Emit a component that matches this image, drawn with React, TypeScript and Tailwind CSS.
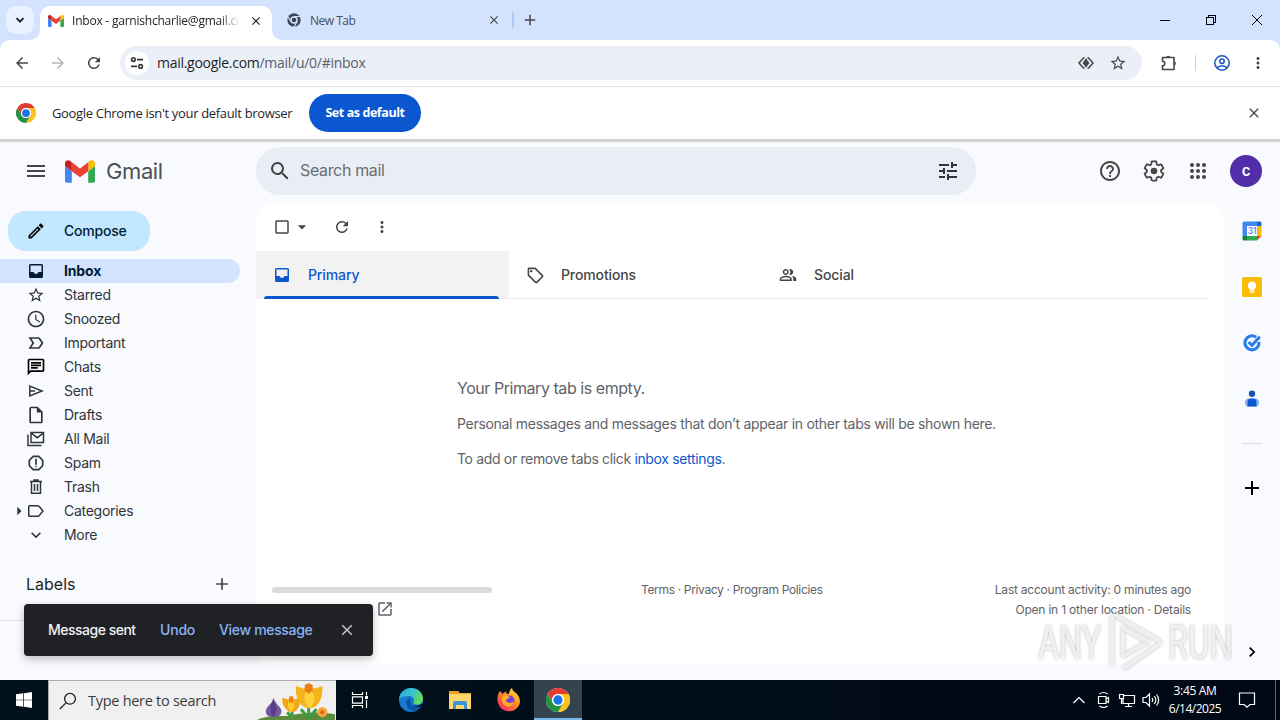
import type { ReactNode } from 'react';
import {
  MdAdd,
  MdArrowBack,
  MdArrowDropDown,
  MdArrowForward,
  MdArrowRight,
  MdCheckBoxOutlineBlank,
  MdChevronRight,
  MdClose,
  MdExpandMore,
  MdHelpOutline,
  MdLabelImportantOutline,
  MdMenu,
  MdMoreVert,
  MdOpenInNew,
  MdOutlineChat,
  MdOutlineEdit,
  MdOutlineInsertDriveFile,
  MdOutlinePeopleAlt,
  MdOutlineReport,
  MdOutlineSell,
  MdRefresh,
  MdSchedule,
  MdSearch,
  MdStarBorder,
  MdTune,
} from 'react-icons/md';

const GmailLogo = ({ className }: { className?: string }) => (
  <svg viewBox="52 42 88 66" className={className}>
    <path fill="#4285f4" d="M58 108h14V74L52 59v43c0 3.32 2.69 6 6 6" />
    <path fill="#34a853" d="M120 108h14c3.32 0 6-2.69 6-6V59l-20 15" />
    <path fill="#fbbc04" d="M120 48v26l20-15v-8c0-7.42-8.47-11.65-14.4-7.2" />
    <path fill="#ea4335" d="M72 74V48l24 18 24-18v26L96 92" />
    <path fill="#c5221f" d="M52 51v8l20 15V48l-5.6-4.2c-5.94-4.45-14.4-.22-14.4 7.2" />
  </svg>
);

const ChromeLogo = ({ className }: { className?: string }) => (
  <svg viewBox="0 0 48 48" className={className}>
    <circle cx="24" cy="24" r="24" fill="#fff" />
    <path fill="#e33b2e" d="M3.2 12A24 24 0 0 1 44.8 12H24a12 12 0 0 0-10.4 18z" />
    <path fill="#fcc31e" d="M44.8 12A24 24 0 0 1 24 48l10.4-18A12 12 0 0 0 24 12z" />
    <path fill="#229342" d="M24 48A24 24 0 0 1 3.2 12l10.4 18a12 12 0 0 0 20.8 0z" />
    <circle cx="24" cy="24" r="12" fill="#fff" />
    <circle cx="24" cy="24" r="9.3" fill="#1a73e8" />
  </svg>
);

const TabCorner = ({ className }: { className?: string }) => (
  <svg viewBox="0 0 10 10" className={`absolute bottom-0 w-2.5 h-2.5 ${className}`}>
    <path fill="#fff" d="M10 0v10H0A10 10 0 0 0 10 0" />
  </svg>
);

const TabStrip = () => (
  <div className="h-10 flex items-center bg-[#d3e3fd] text-[#1f1f1f]">
    <div className="ml-1.5 w-7 h-7 rounded-[10px] bg-[#e9f1fe] flex items-center justify-center">
      <svg viewBox="0 0 10 10" className="w-2.5 h-2.5" fill="none" stroke="#1f1f1f" strokeWidth="1.8">
        <path d="M1.5 3.2 5 6.7l3.5-3.5" />
      </svg>
    </div>
    <div className="relative ml-1.5 w-[232px] h-[34px] self-end bg-white rounded-t-[10px] flex items-center pl-2 pb-[5px]">
      <TabCorner className="-left-2.5" />
      <TabCorner className="-right-2.5 -scale-x-100" />
      <GmailLogo className="w-4 h-4 shrink-0" />
      <span className="ml-2 w-[168px] shrink-0 overflow-hidden whitespace-nowrap text-[12px] tracking-[-0.22px] mask-r-from-88% mask-r-to-100%">
        Inbox - garnishcharlie@gmail.com
      </span>
      <MdClose className="ml-[9px] w-3.5 h-3.5 shrink-0" />
    </div>
    <div className="w-[240px] h-10 flex items-center pl-[15px]">
      <svg viewBox="0 0 48 48" className="w-3.5 h-3.5">
        <circle cx="24" cy="24" r="23" fill="#3c4656" />
        <path d="M24 12h21M13.6 30 3 12M34.4 30 24 48" stroke="#d3e3fd" strokeWidth="4" />
        <circle cx="24" cy="24" r="10.5" fill="#3c4656" stroke="#d3e3fd" strokeWidth="5" />
      </svg>
      <span className="ml-[9px] pt-0.5 text-[12px] text-[#474f5c] tracking-[-0.5px]">New Tab</span>
      <MdClose className="ml-auto mr-[11px] w-3.5 h-3.5 text-[#474747]" />
    </div>
    <div className="w-0.5 h-4 rounded bg-[#a8c7fa]" />
    <MdAdd className="ml-[7px] w-[18px] h-[18px] text-[#474747]" />
    <div className="ml-auto mr-[18px] flex items-center gap-9">
      <svg viewBox="0 0 10 10" className="w-2.5 h-2.5" stroke="#000" shapeRendering="crispEdges">
        <path d="M0 5.5h10" />
      </svg>
      <svg viewBox="0 0 10 10" className="w-2.5 h-2.5" fill="none" stroke="#000" shapeRendering="crispEdges">
        <path d="M.5 2.5h7v7h-7zM2.5 2.5v-2h7v7h-2" />
      </svg>
      <svg viewBox="0 0 10 10" className="w-2.5 h-2.5" stroke="#000">
        <path d="m0 0 10 10M10 0 0 10" />
      </svg>
    </div>
  </div>
);

const AddressBar = () => (
  <div className="bg-[#d3e3fd]">
    <div className="h-[47px] flex items-center bg-white rounded-t-[10px] border-b border-[#e1e3e8] text-[#474747]">
      <MdArrowBack className="ml-[13px] w-[18px] h-[18px]" />
      <MdArrowForward className="ml-[18px] w-[18px] h-[18px] text-[#b4b4b4]" />
      <MdRefresh className="ml-[18px] w-[18px] h-[18px]" />
      <div className="ml-[17px] w-[1022px] h-[34px] rounded-full bg-[#ebeff8] flex items-center pl-[5px]">
        <span className="w-6 h-6 rounded-full bg-white flex items-center justify-center">
          <svg viewBox="0 0 14 14" className="w-3.5 h-3.5" fill="none" stroke="#30343b" strokeWidth="1.6">
            <circle cx="3.4" cy="3.6" r="1.8" />
            <path d="M7 3.6h6M1 10.4h6" />
            <circle cx="10.6" cy="10.4" r="1.8" />
          </svg>
        </span>
        <span className="ml-2 -translate-y-px text-[14px] tracking-[-0.28px] text-[#5b5f66]">
          <span className="text-[#1f1f1f]">mail.google.com</span>/mail/u/0/#inbox
        </span>
        <svg viewBox="0 0 16 16" className="ml-auto w-4 h-4" fill="none" stroke="#474747" strokeWidth="1.5">
          <path d="M6.5 2.8 5.5 3 1 8l4.5 5 1 .2M9.5 2.8l1 .2L15 8l-4.5 5-1 .2" />
          <path d="M8 3.2 11.4 8 8 12.8 4.6 8z" fill="#474747" stroke="none" />
        </svg>
        <MdStarBorder className="ml-[15px] mr-[15px] w-[18px] h-[18px]" />
      </div>
      <svg viewBox="0 0 18 18" className="ml-[18px] w-[18px] h-[18px]" fill="none" stroke="#474747" strokeWidth="1.6">
        <path d="M2.5 3.5h11.5v12H2.5v-3.7a2.3 2.3 0 0 0 0-4.6z" strokeLinejoin="round" />
        <path d="M6.2 3.2a2.1 2.1 0 0 1 4 0zM14.5 7.5a2.1 2.1 0 0 1 0 4z" fill="#474747" stroke="none" />
      </svg>
      <div className="ml-[17px] w-px h-4 bg-[#c7d3ea]" />
      <svg viewBox="0 0 16 16" className="ml-[18px] w-4 h-4" fill="none" stroke="#1b55c4" strokeWidth="1.5">
        <circle cx="8" cy="8" r="7.2" />
        <circle cx="8" cy="6.2" r="2.2" />
        <path d="M3 13c1.2-1.6 3-2.2 5-2.2s3.8.6 5 2.2" />
      </svg>
      <MdMoreVert className="ml-[19px] w-[18px] h-[18px]" />
    </div>
  </div>
);

const InfoBar = () => (
  <div className="relative z-10 h-[52px] flex items-center bg-white pl-4 shadow-[0_2px_0_#cfcfcf,0_3px_1px_#d8d8d8]">
    <ChromeLogo className="w-5 h-5" />
    <span className="ml-4 w-[241px] pt-px whitespace-nowrap text-[13px] tracking-[-0.33px] text-[#1f1f1f]">
      Google Chrome isn't your default browser
    </span>
    <button className="ml-4 w-28 h-[38px] pt-px rounded-full bg-[#0b57d0] text-white text-[12.5px] font-bold tracking-[-0.42px]">
      Set as default
    </button>
    <MdClose className="ml-auto mr-[18px] w-4 h-4 text-[#474747]" />
  </div>
);

const InboxIcon = () => (
  <svg viewBox="0 0 20 20" className="w-5 h-5" fill="currentColor">
    <path
      fillRule="evenodd"
      d="M4.500 3h11A1.500 1.500 0 0 1 17 4.500v11a1.500 1.500 0 0 1-1.500 1.500h-11A1.500 1.500 0 0 1 3 15.500v-11A1.500 1.500 0 0 1 4.500 3zm0 1.500V11h3q.8 2 2.500 2t2.500-2h3V4.500z"
    />
  </svg>
);

const MailStackIcon = () => (
  <svg viewBox="0 0 20 20" className="w-5 h-5" fill="none" stroke="currentColor" strokeWidth="1.5">
    <path d="M5 3.5h12.5v10H5zM5 4l6.25 4.7L17.5 4M2 5.5v11h13.5" />
  </svg>
);

const SentIcon = () => (
  <svg viewBox="0 0 20 20" className="w-5 h-5" fill="none" stroke="currentColor" strokeWidth="1.5">
    <path d="M3.8 5v10L16 10zM4 10h5" />
  </svg>
);

const TrashIcon = () => (
  <svg viewBox="0 0 20 20" className="w-5 h-5" fill="none" stroke="currentColor" strokeWidth="1.5">
    <path d="M4 4.5h12M8 4V3h4v1M5.5 5v11.2h9V5M8.5 7v7M11.5 7v7" />
  </svg>
);

const LabelIcon = () => (
  <svg viewBox="0 0 20 20" className="w-5 h-5" fill="none" stroke="currentColor" strokeWidth="1.5" strokeLinejoin="round">
    <path d="M3.5 4.75h8.500q.6 0 1 .5L17 10l-4 4.750q-.4.5-1 .5H3.500q-.75 0-.75-.75v-9q0-.75.75-.75z" />
  </svg>
);

const GearIcon = () => (
  <svg viewBox="0 0 24 24" className="w-6 h-6" fill="none" stroke="currentColor" strokeWidth="1.8">
    <path d="M19.14 12.94c.04-.3.06-.61.06-.94 0-.32-.02-.64-.07-.94l2.03-1.58c.18-.14.23-.41.12-.61l-1.92-3.32c-.12-.22-.37-.29-.59-.22l-2.39.96c-.5-.38-1.03-.7-1.62-.94l-.36-2.54c-.04-.24-.24-.41-.48-.41h-3.84c-.24 0-.43.17-.47.41l-.36 2.54c-.59.24-1.13.57-1.62.94l-2.39-.96c-.22-.08-.47 0-.59.22L2.74 8.87c-.12.21-.08.47.12.61l2.03 1.58c-.05.3-.09.63-.09.94s.02.64.07.94l-2.03 1.58c-.18.14-.23.41-.12.61l1.92 3.32c.12.22.37.29.59.22l2.39-.96c.5.38 1.03.7 1.62.94l.36 2.54c.05.24.24.41.48.41h3.84c.24 0 .44-.17.47-.41l.36-2.54c.59-.24 1.13-.56 1.62-.94l2.39.96c.22.08.47 0 .59-.22l1.92-3.32c.12-.22.07-.47-.12-.61z" />
    <circle cx="12" cy="12" r="3.3" fill="currentColor" stroke="none" />
  </svg>
);

const folders: { label: string; icon: ReactNode; active?: boolean; caret?: boolean }[] = [
  { label: 'Inbox', icon: <InboxIcon />, active: true },
  { label: 'Starred', icon: <MdStarBorder className="w-[18px] h-[18px]" /> },
  { label: 'Snoozed', icon: <MdSchedule className="w-5 h-5" /> },
  { label: 'Important', icon: <MdLabelImportantOutline className="w-5 h-5" /> },
  { label: 'Chats', icon: <MdOutlineChat className="w-5 h-5 text-black" /> },
  { label: 'Sent', icon: <SentIcon /> },
  { label: 'Drafts', icon: <MdOutlineInsertDriveFile className="w-5 h-5" /> },
  { label: 'All Mail', icon: <MailStackIcon /> },
  { label: 'Spam', icon: <MdOutlineReport className="w-5 h-5" /> },
  { label: 'Trash', icon: <TrashIcon /> },
  { label: 'Categories', icon: <LabelIcon />, caret: true },
  { label: 'More', icon: <MdExpandMore className="w-5 h-5" /> },
];

const GmailHeader = () => (
  <header className="h-[63px] pt-2 flex items-start text-[#444746]">
    <div className="w-64 h-12 flex items-center">
      <MdMenu className="ml-6 w-6 h-6" />
      <GmailLogo className="ml-[17px] w-[30px] h-[23px]" />
      <span className="ml-[11px] text-[22px] tracking-[-0.4px] text-[#4d5156]">Gmail</span>
    </div>
    <div className="w-[720px] h-12 rounded-full bg-[#e9eef6] flex items-center pl-3">
      <MdSearch className="w-6 h-6 text-[#3c4043]" />
      <span className="ml-2 -translate-y-px text-[16px] tracking-[-0.35px] text-[#6a6d70]">Search mail</span>
      <MdTune className="ml-auto mr-4 w-6 h-6 text-[#30343b]" />
    </div>
    <div className="ml-auto mr-[18px] h-12 flex items-center gap-5">
      <MdHelpOutline className="w-6 h-6" />
      <GearIcon />
      <svg viewBox="0 0 24 24" className="w-6 h-6" fill="currentColor">
        {[6, 12, 18].map((y) => [6, 12, 18].map((x) => <circle key={`${x}-${y}`} cx={x} cy={y} r="2" />))}
      </svg>
      <span className="w-8 h-8 rounded-full bg-[#512da8] text-white text-[15px] font-semibold flex items-center justify-center">
        c
      </span>
    </div>
  </header>
);

const Sidebar = () => (
  <aside className="w-64 pt-2 text-[14px] text-[#30343b]">
    <button className="ml-2 w-[142px] h-10 rounded-[18px] bg-[#c2e7ff] flex items-center pl-[18px] text-[#001d35] font-medium">
      <MdOutlineEdit className="w-5 h-5 text-black" />
      <span className="ml-[18px] -translate-y-px tracking-[-0.2px]">Compose</span>
    </button>
    <nav className="mt-2">
      {folders.map((f) => (
        <div
          key={f.label}
          className={`w-60 h-6 flex items-center rounded-r-full ${f.active ? 'bg-[#d3e3fd] text-[#001d35] font-bold' : ''}`}
        >
          <span className="w-[26px] flex justify-end">
            {f.caret && <MdArrowRight className="w-5 h-5 -mr-[3px] text-[#30343b]" />}
          </span>
          <span className="w-5 flex justify-center">{f.icon}</span>
          <span className={`ml-[18px] -translate-y-px ${f.active ? 'tracking-[-0.15px]' : 'tracking-[-0.28px]'}`}>{f.label}</span>
        </div>
      ))}
    </nav>
    <div className="mt-[25px] mb-px h-6 pl-[26px] pr-6 flex items-center justify-between text-[16px] text-[#1f1f1f]">
      <span>Labels</span>
      <MdAdd className="w-5 h-5 text-[#444746]" />
    </div>
    <div className="mt-6 h-px bg-[#e0e4ea]" />
  </aside>
);

const tabs = [
  { label: 'Primary', icon: <InboxIcon />, active: true },
  { label: 'Promotions', icon: <MdOutlineSell className="w-[19px] h-[19px]" /> },
  { label: 'Social', icon: <MdOutlinePeopleAlt className="w-[18px] h-[18px]" /> },
];

const MailPanel = () => (
  <main className="w-[968px] h-[461px] flex flex-col rounded-2xl bg-white text-[#444746]">
    <div className="h-12 shrink-0 flex items-center">
      <MdCheckBoxOutlineBlank className="ml-[17px] w-[18px] h-[18px]" />
      <MdArrowDropDown className="ml-px w-5 h-5" />
      <MdRefresh className="ml-[21px] w-[18px] h-[18px]" />
      <MdMoreVert className="ml-[22px] w-[18px] h-[18px]" />
    </div>
    <div className="mr-4 h-12 shrink-0 flex border-b border-[#e8eaed]">
      {tabs.map((tab) => (
        <div
          key={tab.label}
          className={`relative w-[253px] h-12 flex items-center pl-4 text-[14px] font-medium ${tab.active ? 'bg-[#f2f2f2] text-[#0b57d0]' : ''}`}
        >
          <span className="w-5 flex justify-center">{tab.icon}</span>
          <span className="ml-4 -translate-y-px tracking-[-0.12px]">{tab.label}</span>
          {tab.active && <i className="absolute left-2 right-2.5 bottom-0 h-[3px] rounded-t bg-[#0b57d0]" />}
        </div>
      ))}
    </div>
    <div className="ml-[201px] mt-[77px] text-[14px] tracking-[-0.3px] text-[#5f6368]">
      <p className="h-6 leading-6 text-[16px] tracking-[-0.45px]">Your Primary tab is empty.</p>
      <p className="mt-[13px] h-[22px] leading-[22px]">
        Personal messages and messages that don’t appear in other tabs will be shown here.
      </p>
      <p className="mt-[13px] h-[22px] leading-[22px] tracking-[-0.34px]">
        To add or remove tabs click <span className="text-[#0b57d0]">inbox settings</span>.
      </p>
    </div>
    <footer className="mt-[110px] pl-4 pr-[33px] flex text-[12px] leading-5 text-[#5f6368]">
      <div className="w-[220px] pt-[7px]">
        <div className="h-1.5 rounded-full bg-[#dadada]" />
        <MdOpenInNew className="ml-auto mr-[98px] mt-[7px] w-[18px] h-[18px]" />
      </div>
      <div className="flex-1 pl-[149px] tracking-[-0.34px]">Terms · Privacy · Program Policies</div>
      <div className="text-right">
        <p className="tracking-[-0.23px]">Last account activity: 0 minutes ago</p>
        <p className="tracking-[-0.2px]">Open in 1 other location · Details</p>
      </div>
    </footer>
  </main>
);

const SideRail = () => (
  <div className="w-14 h-[461px] pt-[18px] flex flex-col items-center">
    <svg viewBox="0 0 20 20" className="w-5 h-5">
      <path fill="#4285f4" d="M2 .5h13V5H5v10H.5V2A1.5 1.5 0 0 1 2 .5" />
      <path fill="#1967d2" d="M15 .5h3A1.5 1.5 0 0 1 19.5 2v3H15z" />
      <path fill="#fbbc04" d="M15 5h4.5v10H15z" />
      <path fill="#34a853" d="M5 15h10v4.5H5z" />
      <path fill="#188038" d="M.5 15H5v4.5H2A1.5 1.5 0 0 1 .5 18z" />
      <path fill="#ea4335" d="M15 15h4.5L15 19.5z" />
      <path fill="#fff" d="M5 5h10v10H5z" />
      <text x="10" y="13.2" textAnchor="middle" className="text-[8.5px] font-medium tracking-[-0.3px]" fill="#3c78e6">
        31
      </text>
    </svg>
    <svg viewBox="0 0 20 20" className="mt-9 w-5 h-5">
      <rect width="20" height="20" rx="1.5" fill="#fbbc04" />
      <circle cx="10" cy="8.8" r="4.2" fill="#fff" />
      <path fill="#fff" d="M7.8 11h4.4v2.5H7.8zM7.8 14.3h4.4v1.5H7.8z" />
    </svg>
    <svg viewBox="0 0 20 20" className="mt-9 w-5 h-5" fill="none" stroke="#2a7de9" strokeWidth="3">
      <path d="M14.2 4.3A7 7 0 1 0 16.9 9" />
      <path d="m6.5 9 3.5 3.3 7.8-8.5" />
    </svg>
    <svg viewBox="0 0 20 20" className="mt-9 w-5 h-5">
      <rect x="3" y="9.5" width="14" height="8" rx="3.5" fill="#8ab4f8" />
      <circle cx="10" cy="4.8" r="3.2" fill="#1a56b8" />
      <path fill="#0b57d0" d="M5.5 12.5A3.5 3.5 0 0 1 9 9.5h2a3.5 3.5 0 0 1 3.5 3v5h-9z" />
    </svg>
    <div className="mt-[34px] w-5 h-px bg-[#dadce0]" />
    <MdAdd className="mt-8 w-6 h-6 text-black" />
    <MdChevronRight className="mt-auto mb-0.5 w-5 h-5 text-black stroke-black" />
  </div>
);

const Toast = () => (
  <div className="absolute left-6 bottom-6 w-[349px] h-[52px] rounded bg-[#202124] flex items-center pl-6 text-[14px] font-medium text-[#8ab4f8] shadow-[0_3px_8px_rgba(0,0,0,0.25)]">
    <span className="w-22 -translate-y-px whitespace-nowrap text-[#f2f2f2] tracking-[-0.5px]">Message sent</span>
    <span className="ml-6 w-[35px] -translate-y-px tracking-[-0.2px]">Undo</span>
    <span className="ml-6 -translate-y-px tracking-[-0.33px]">View message</span>
    <MdClose className="ml-auto mr-[17px] w-[18px] h-[18px] text-[#c4c7c5]" />
  </div>
);

const Watermark = () => (
  <div className="absolute left-[1038px] bottom-[7px] w-[198px] h-[62px] flex items-center justify-between font-[Roboto,sans-serif] text-[49px] leading-none text-white/70 drop-shadow-[0_0_1.5px_rgba(0,0,0,0.4)]">
    <span className="w-[66px] origin-left scale-x-[0.66]">ANY</span>
    <svg viewBox="0 0 56 62" className="absolute left-[70px] w-14 h-[62px]" fill="none" stroke="currentColor" strokeWidth="4" strokeLinejoin="round">
      <path d="M4 54V7q0-4 4-2l42 24q4 2 0 5L16 57" />
      <path d="M15 17v28l25-14z" />
    </svg>
    <span className="w-[68px] origin-left scale-x-[0.67]">RUN</span>
  </div>
);

const Flowers = () => (
  <svg viewBox="0 0 80 40" className="w-20 h-full">
    <path fill="#5b8b3c" d="M0 40c10-5 22-4 32-4 14-4 32-5 48-2v6z" />
    <path stroke="#3e9b46" strokeWidth="3" fill="none" d="M36 38V28M53 38V25M53 38l8-9M36 38l-5-6M53 38l-8-9" />
    <path fill="#7556a0" d="M17 17c1 7 8 9 8 14 0 4-3 6-8 6s-8-2-8-6c0-5 7-7 8-14" />
    <path fill="#563c82" d="M17 19c3 6 4 12 0 18-4-4-4-12 0-18" />
    <path fill="#f2a516" d="m26 17 6 2 3-4 4 4 5-2c1 7-2 15-8 15s-11-8-10-15" />
    <path fill="#ffcb35" d="M35 17c5 5 4 11 0 15-4-4-5-10 0-15" />
    <path fill="#f5b21a" d="m40 5 8 3 5-5 6 5 8-3c1 13-4 22-13 23-10-1-15-10-14-23" />
    <path fill="#ffd23b" d="M53 7c8 8 7 15 1 21-7-6-7-13-1-21" />
    <path fill="#ee7d13" d="m49 4 4-2 4 2v6l-4 3-4-3zM33 16h4v6h-4z" />
    <circle cx="67" cy="32" r="5.2" fill="#f6a63b" />
    <circle cx="67" cy="32" r="2" fill="#d95f14" />
  </svg>
);

const Taskbar = () => (
  <div className="h-10 flex items-center bg-linear-to-r from-[#00131c] to-[#000815] text-white">
    <div className="w-12 flex justify-center">
      <svg viewBox="0 0 16 16" className="w-4 h-4" fill="#fff">
        <path d="M0 2.3 7.3 1.3v6.4H0zM8 1.2 16 0v7.7H8zM0 8.3h7.3v6.4L0 13.7zM8 8.3h8V16l-8-1.2z" />
      </svg>
    </div>
    <div className="w-72 h-10 flex items-center bg-[#f0f0f0] border-t border-l border-[#a9adb0] text-[#3b3b3b]">
      <svg viewBox="0 0 18 18" className="ml-2.5 w-[18px] h-[18px]" fill="none" stroke="#222" strokeWidth="1.3">
        <circle cx="11" cy="6.8" r="5.4" />
        <path d="m7.2 10.6-6.4 6.4" />
      </svg>
      <span className="ml-[11px] text-[14.5px] tracking-[-0.28px]">Type here to search</span>
      <span className="ml-auto h-full">
        <Flowers />
      </span>
    </div>
    <div className="w-12 flex justify-center">
      <svg viewBox="0 0 18 18" className="w-[18px] h-[18px]" fill="none" stroke="#fff" strokeWidth="1.2">
        <path d="M1.5 1v2.5h10V1M1.5 5.8h10v6.4h-10zM1.5 17v-2.5h10V17M15.5 1v3.5M15.5 9v8" />
        <path d="M14 5h3v3h-3z" fill="#fff" stroke="none" />
      </svg>
    </div>
    <div className="w-[54px] flex justify-center">
      <svg viewBox="0 0 24 24" className="w-6 h-6">
        <defs>
          <linearGradient id="edgeTop" x1="0" y1="0" x2="1" y2="0.4">
            <stop offset="0" stopColor="#2aa8e8" />
            <stop offset="0.6" stopColor="#36c6c8" />
            <stop offset="1" stopColor="#66d95a" />
          </linearGradient>
        </defs>
        <circle cx="12" cy="12" r="12" fill="#1579cf" />
        <path fill="url(#edgeTop)" d="M0 11C1 4 6 0 12 0c7 0 12 5 12 10.5 0 4-3 6-6 6-2.5 0-4-.8-3.5-2 1.5-3 0-6.5-4.5-6.5-4 0-8 1-10 3" />
        <path fill="#0f4fa3" d="M9 10.5c-3 3-2 9.5 3.5 11.5 3 1 6.500.2 9-3-6 2-11-1-10.500-6 .1-2 1-2.500 1-2.500z" />
        <path fill="#00131c" d="M11.5 12c-1.2 3 1.2 6 5 6 2.500 0 4.500-.8 6.500-2.200l.8 1.200-1.200 1.400c-6 1.700-12.100-.6-11.100-6.400" />
      </svg>
    </div>
    <div className="w-11 flex justify-center">
      <svg viewBox="0 0 22 20" className="w-[22px] h-5">
        <path fill="#e8a51c" d="M0 1h9l2 2h11v4H0z" />
        <path fill="#fbd66c" d="M0 4h22v15H0z" />
        <path fill="#3f94d6" d="M4 19v-6q0-2 2-2h10q2 0 2 2v6h-3v-4H7v4z" />
      </svg>
    </div>
    <div className="w-[52px] flex justify-center">
      <svg viewBox="0 0 24 24" className="ml-0.5 w-6 h-6">
        <defs>
          <linearGradient id="fox" x1="1" y1="0" x2="0.2" y2="1">
            <stop offset="0" stopColor="#fff24a" />
            <stop offset="0.45" stopColor="#ff9a1f" />
            <stop offset="1" stopColor="#f5246a" />
          </linearGradient>
        </defs>
        <path fill="url(#fox)" d="M3 3c1 1 2 2 2.5 3 1-1 2-2 4-2.5C9 4.5 9 5 9.5 5.5L12 6c0-2 1-5 3-6 .5 2.5 2 3.5 4 5 3.5 3 5 8 3 12.5A11.5 11.5 0 0 1 1 15C0 11 0 7 3 3" />
        <circle cx="12.5" cy="12.5" r="5" fill="#7a3be8" />
        <path fill="#ffae20" d="M6 8c3-1 5 0 7 1-1 2-4 1.5-4 3.5 1 3 5 3 8 1-1 5-6 6-9 4S4 11 6 8" />
      </svg>
    </div>
    <div className="w-12 h-10 pt-0.5 flex items-center justify-center bg-[#33444c] border-b-2 border-[#76b9ed]">
      <ChromeLogo className="w-6 h-6" />
    </div>
    <div className="ml-auto flex items-center">
      <svg viewBox="0 0 12 8" className="w-3 h-2" fill="none" stroke="#fff" strokeWidth="1.2">
        <path d="m.5 7 5.5-5.5L11.5 7" />
      </svg>
      <svg viewBox="0 0 14 18" className="ml-3 w-3.5 h-[18px]" fill="none" stroke="#fff" strokeWidth="1.2">
        <path d="M1.5 5.5h7.5v7H1.5zM9 8l2.5-1.5v5L9 10M2.5 3q4-3 8 0M2.5 15q4 3 8 0" />
      </svg>
      <svg viewBox="0 0 18 16" className="ml-[7px] w-[18px] h-4" fill="none" stroke="#fff" strokeWidth="1.2">
        <path d="M6 3.5h10.5v8H5v-5M1.5 2.5h4v4h-4zM3.5 6.5v5.5M10.5 11.5v3M7 14.5h7" />
      </svg>
      <svg viewBox="0 0 18 16" className="ml-1.5 w-[18px] h-4" fill="none" stroke="#fff" strokeWidth="1.2">
        <path d="M1 5.5h3L7.5 2v12L4 10.5H1zM10 6q1.5 2 0 4M12.3 4q3 4 0 8M14.6 2.5q4 5.5 0 11" />
      </svg>
      <div className="ml-1.5 w-[58px] text-center text-[12px] leading-[18px] tracking-[-0.35px] whitespace-nowrap">
        <p>3:45 AM</p>
        <p className="tracking-[-0.5px]">6/14/2025</p>
      </div>
      <svg viewBox="0 0 18 18" className="ml-3.5 w-[18px] h-[18px]" fill="none" stroke="#fff" strokeWidth="1.2">
        <path d="M1.5 2h15v11.5H12l-3 2.8-3-2.8H1.5z" />
      </svg>
      <div className="ml-[19px] mr-1 w-px h-10 bg-[#5d666c]" />
    </div>
  </div>
);

const App = () => {
  return (
    <div className="w-[1280px] h-[720px] overflow-hidden flex flex-col font-[Open_Sans,sans-serif]">
      <TabStrip />
      <AddressBar />
      <InfoBar />
      <div className="relative h-[541px] bg-[#f8fafd] font-[Inter,sans-serif]">
        <GmailHeader />
        <div className="mt-px flex items-start">
          <Sidebar />
          <MailPanel />
          <SideRail />
        </div>
        <Toast />
        <Watermark />
      </div>
      <Taskbar />
    </div>
  );
};

export default App;
